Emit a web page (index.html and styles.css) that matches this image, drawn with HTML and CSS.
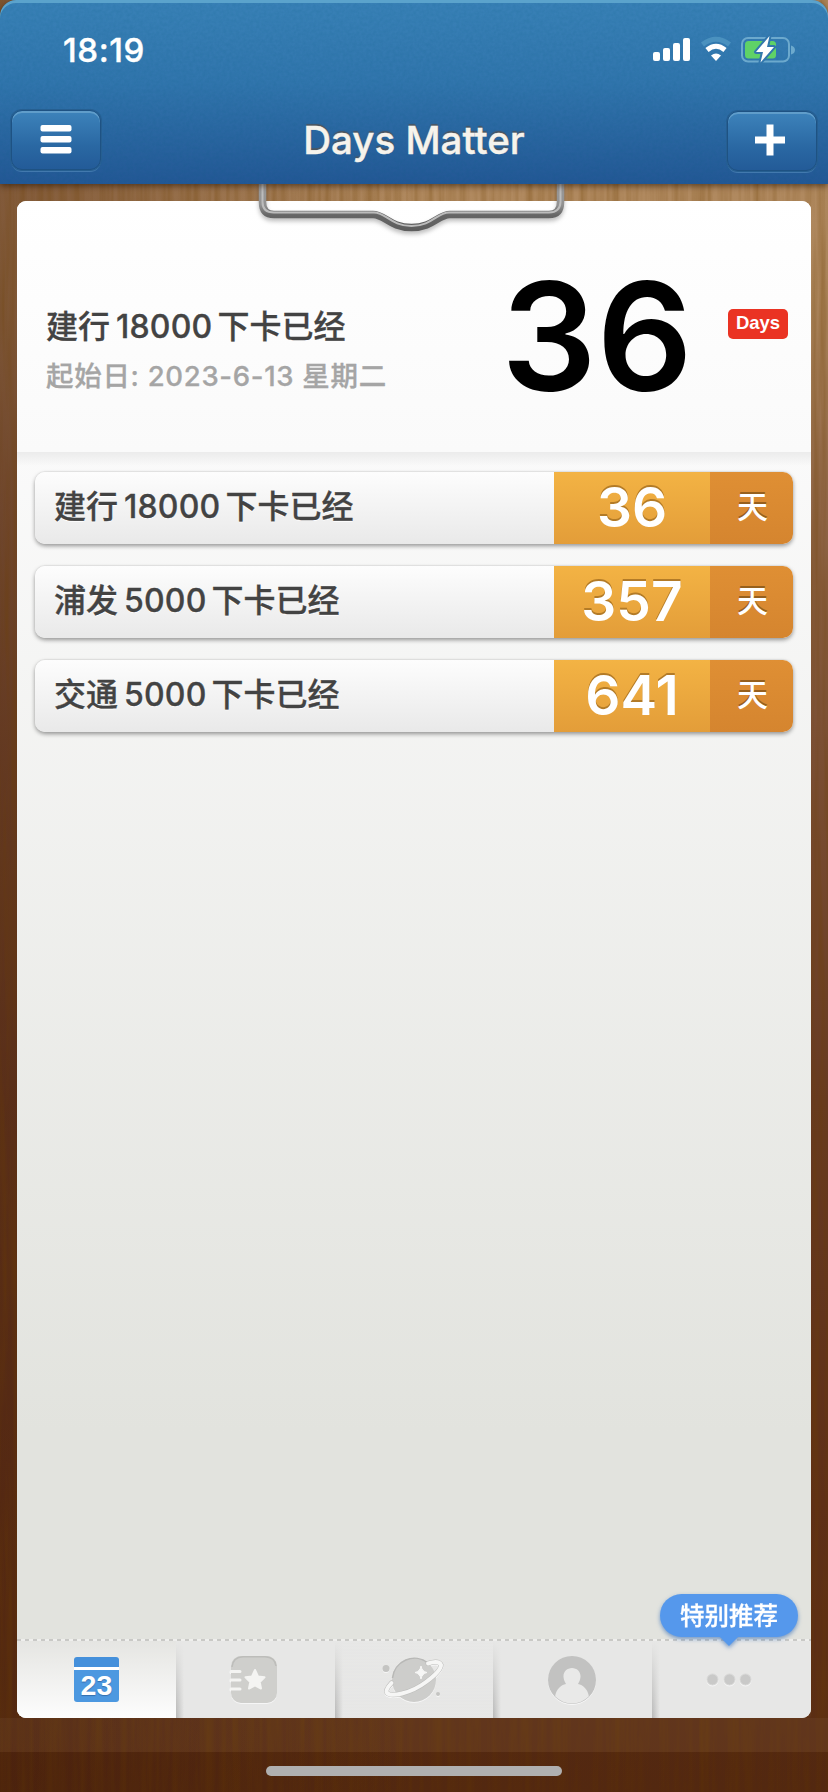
FILE: index.html
```
<!DOCTYPE html>
<html lang="zh-CN">

<head>
  <meta charset="utf-8">
  <meta name="viewport" content="width=device-width, initial-scale=1.0">
  <title>Days Matter</title>
  <link rel="stylesheet" href="styles.css">
</head>

<body>
  <header class="header">
    <div class="status-bar">
      <span class="time">18:19</span>
      <svg class="status-icons" width="144" height="30" viewBox="0 0 144 30">
        <g fill="#fff">
          <rect x="1" y="17" width="7" height="9" rx="2" />
          <rect x="11" y="13" width="7" height="13" rx="2" />
          <rect x="21" y="8" width="7" height="18" rx="2" />
          <rect x="31" y="3" width="7" height="23" rx="2" />
        </g>
        <path d="M50.5 9.5Q64 -1 77.5 9.5" fill="none" stroke="#4a91bf" stroke-width="5" />
        <path d="M55 15Q64 7.500 73 15" fill="none" stroke="#fff" stroke-width="5" />
        <path d="M59 20.500Q64 16.500 69 20.500L64 26Z" fill="#fff" />
        <rect x="90" y="3" width="47" height="23.500" rx="6" fill="none" stroke="#6ca9cd" stroke-width="2" />
        <path d="M139 10.500Q143 11.500 143 15T139 19.500Z" fill="#6ca9cd" />
        <rect x="93" y="6" width="31" height="17.500" rx="3.500" fill="#5fd267" />
        <path d="M117.500 1L104 17H111L108.500 27.500L122 12H115Z" fill="#fff" stroke="#3277ad" stroke-width="4"
          stroke-linejoin="round" paint-order="stroke" />
      </svg>
    </div>
    <div class="nav-bar">
      <button class="nav-button" aria-label="菜单">
        <svg width="32" height="30" viewBox="0 0 32 30" fill="#fff">
          <rect x="0.500" y="0" width="31" height="6.500" rx="2" />
          <rect x="0.500" y="11" width="31" height="6.500" rx="2" />
          <rect x="0.500" y="22" width="31" height="6.500" rx="2" />
        </svg>
      </button>
      <h1 class="title">Days Matter</h1>
      <button class="nav-button add" aria-label="添加">
        <svg width="32" height="32" viewBox="0 0 32 32" fill="#fff">
          <path d="M12.500 0.500H19.500V12.500H31V19.500H19.500V31.500H12.500V19.500H1V12.500H12.500Z" />
        </svg>
      </button>
    </div>
  </header>

  <main class="board">
    <!-- 夹子 -->
    <svg class="clip" width="320" height="60" viewBox="0 0 320 60" fill="none">
      <defs>
        <linearGradient id="metal" x1="0" y1="0" x2="0" y2="52" gradientUnits="userSpaceOnUse">
          <stop offset="0" stop-color="#9a9a9a" />
          <stop offset="0.400" stop-color="#929292" />
          <stop offset="0.600" stop-color="#666" />
          <stop offset="1" stop-color="#5a5a5a" />
        </linearGradient>
      </defs>
      <path class="clip-wire"
        d="M8.500 -4V18Q8.500 30.500 20 30.500H119C131 30.500 136 43.500 157.500 43.500S184 30.500 196 30.500H295Q306.500 30.500 306.500 18V-4"
        stroke="url(#metal)" stroke-width="7.500" />
      <path
        d="M8.500 -4V18Q8.500 28.500 20 28.500H120C132 28.500 137 42 157.500 42S183 28.500 195 28.500H295Q306 28.500 306.500 18V-4"
        stroke="#bcbcbc" stroke-width="2" />
    </svg>

    <section class="hero">
      <div class="hero-info">
        <h2 class="hero-title">建行<span class="num">18000</span>下卡已经</h2>
        <p class="hero-date">起始日: 2023-6-13 星期二</p>
      </div>
      <div class="hero-days">36</div>
      <span class="hero-badge">Days</span>
    </section>

    <ul class="events">
      <li class="event">
        <span class="event-name">建行<span class="num">18000</span>下卡已经</span>
        <span class="event-days">36</span>
        <span class="event-unit">天</span>
      </li>
      <li class="event">
        <span class="event-name">浦发<span class="num">5000</span>下卡已经</span>
        <span class="event-days">357</span>
        <span class="event-unit">天</span>
      </li>
      <li class="event">
        <span class="event-name">交通<span class="num">5000</span>下卡已经</span>
        <span class="event-days">641</span>
        <span class="event-unit">天</span>
      </li>
    </ul>

    <nav class="tabs">
      <a class="tab active">
        <span class="calendar">23</span>
      </a>
      <a class="tab">
        <svg class="tab-icon" width="50" height="50" viewBox="0 0 50 50">
          <rect x="2" y="1" width="46" height="47" rx="10" fill="#cfcfcc" />
          <path d="M3 12Q4 2 14 1.700H36Q46 2 47 11" fill="none" stroke="#bdbdba" stroke-width="1.500" />
          <path d="M2 16.500H11M2 25H11M2 34H11" stroke="#f4f4f2" stroke-width="3" stroke-linecap="round" />
          <path d="M26 15L29 21.500L35.500 22.300L30.700 27L32 33.500L26 30.300L20 33.500L21.300 27L16.500 22.300L23 21.500Z"
            fill="#f4f4f2" stroke="#f4f4f2" stroke-width="2" stroke-linejoin="round" />
        </svg>
      </a>
      <a class="tab">
        <svg class="tab-icon" width="64" height="50" viewBox="0 0 64 50">
          <circle cx="5" cy="13.500" r="3.500" fill="#c4c4c2" />
          <circle cx="57" cy="39" r="2" fill="#c4c4c2" />
          <circle cx="33" cy="25" r="22" fill="#cdcdcb" />
          <path d="M11.500 23A22 22 0 0 1 47 8" fill="none" stroke="#b8b8b6" stroke-width="1.500" />
          <path d="M10.500 28Q4 35 6 38C10 42 29 39 45 27Q60 16 60 10Q58 5 47 8.500" fill="none" stroke="#bdbdbb"
            stroke-width="5" stroke-linecap="round" />
          <path d="M10.500 28Q4 35 6 38C10 42 29 39 45 27Q60 16 60 10Q58 5 47 8.500" fill="none" stroke="#f6f6f5"
            stroke-width="4" stroke-linecap="round" />
          <path d="M40 11Q41 16.500 46 17.500Q41 18.500 40 24Q39 18.500 34 17.500Q39 16.500 40 11Z" fill="#f6f6f5"
            stroke="#f6f6f5" />
        </svg>
      </a>
      <a class="tab">
        <svg class="tab-icon" width="50" height="50" viewBox="0 0 50 50">
          <defs>
            <clipPath id="face">
              <circle cx="25" cy="25" r="23.500" />
            </clipPath>
          </defs>
          <circle cx="25" cy="25" r="24" fill="#c2c2c1" />
          <g clip-path="url(#face)" fill="#e9e9e8">
            <path d="M25 13C30 13 34 17 33.500 22C33.300 25 32 27 31 29C36 30 41 34 42 42V50H8V42C9 34 14 30 19 29C18 27 16.700 25 16.500 22C16 17 20 13 25 13Z" />
          </g>
        </svg>
      </a>
      <a class="tab">
        <svg class="tab-icon more" width="48" height="16" viewBox="0 0 48 16" fill="#c9c9c8" stroke="#d7d7d6">
          <circle cx="7.500" cy="7.500" r="5.500" />
          <circle cx="24.500" cy="7.500" r="5.500" />
          <circle cx="40.500" cy="7.500" r="5.500" />
        </svg>
        <span class="tip">特别推荐</span>
      </a>
    </nav>
  </main>

  <footer class="footer">
    <div class="home-indicator"></div>
  </footer>
</body>

</html>
```

FILE: styles.css
```
* {
  box-sizing: border-box;
}

body {
  margin: 0;
  height: 1792px;
  display: flex;
  flex-direction: column;
  overflow: hidden;
  font-family: Inter, "Noto Sans CJK SC", sans-serif;
  font-weight: 500;
  color: #434343;
  /* 木纹背景 */
  background:
    url("data:image/svg+xml,%3Csvg xmlns='http://www.w3.org/2000/svg' width='828' height='1792'%3E%3Cfilter id='w'%3E%3CfeTurbulence type='fractalNoise' baseFrequency='0.15 0.006' numOctaves='3' seed='4'/%3E%3CfeColorMatrix values='0 0 0 0 0.15 0 0 0 0 0.05 0 0 0 0 0 0.6 0 0 0 -0.2'/%3E%3C/filter%3E%3Crect width='828' height='1792' filter='url(%23w)'/%3E%3C/svg%3E"),
    linear-gradient(90deg, rgba(72, 32, 12, 0.45), rgba(72, 32, 12, 0) 50%),
    linear-gradient(#b18a60 180px, #a98258 300px, #906647 500px, #7b4f33 740px, #673a22 1100px, #5e2f17 1500px, #5a2d12);
}

.header {
  height: 184px;
  flex: none;
  border-radius: 16px 16px 0 0;
  background:
    url("data:image/svg+xml,%3Csvg xmlns='http://www.w3.org/2000/svg' width='200' height='184'%3E%3Cfilter id='n'%3E%3CfeTurbulence type='fractalNoise' baseFrequency='0.3' numOctaves='2' stitchTiles='stitch'/%3E%3CfeColorMatrix values='0 0 0 0 0 0 0 0 0 0.1 0 0 0 0 0.2 0.2 0 0 0 -0.05'/%3E%3C/filter%3E%3Crect width='200' height='184' filter='url(%23n)'/%3E%3C/svg%3E"),
    linear-gradient(#3981b7, #3175ad 45%, #235795);
  box-shadow: inset 0 3px 0 #5ba3cc, 0 2px 6px rgba(40, 20, 0, 0.6);
  position: relative;
  z-index: 1;
}

.status-bar {
  height: 100px;
  padding: 0 32px 0 63px;
  display: flex;
  justify-content: space-between;
  align-items: center;
}

.time {
  font-size: 33px;
  font-weight: 500;
  letter-spacing: 0.6px;
  color: #fff;
  -webkit-text-stroke: 0.4px #fff;
}

.nav-bar {
  height: 80px;
  padding: 0 11px 0 11px;
  display: flex;
  justify-content: space-between;
  align-items: center;
}

.nav-button {
  width: 90px;
  height: 60px;
  padding: 0;
  display: flex;
  justify-content: center;
  align-items: center;
  border: 1px solid #1e5283;
  border-radius: 11px;
  background: linear-gradient(#3d83bb, #2a68a3 60%, #235b98);
  box-shadow: inset 0 2px 0 #609dca, 0 0 0 1px #265f91, 0 2px 0 #4279ae;
}

.nav-button.add {
  padding: 0 4px 3px 0;
  margin-top: 2px;
}

.title {
  margin: 0;
  font-size: 38.500px;
  font-weight: 500;
  letter-spacing: 0;
  color: #f6f3ec;
  text-shadow: 0 -2px 1px #4c5660;
  -webkit-text-stroke: 0.4px #f6f3ec;
}

.board {
  position: relative;
  height: 1517px;
  flex: none;
  margin: 17px 17px 0;
  display: flex;
  flex-direction: column;
  border-radius: 9px;
  background: linear-gradient(#fafafa 250px, #e2e3de 1230px);
}

.clip {
  position: absolute;
  left: 237px;
  top: -17px;
}

.clip-wire {
  filter: drop-shadow(0 3px 2px rgba(0, 0, 0, 0.25));
}

.hero {
  height: 251px;
  flex: none;
  display: flex;
  align-items: flex-start;
  padding-left: 29px;
  border-radius: 9px 9px 0 0;
  background: linear-gradient(#fff, #fafafa);
}

.hero-info {
  width: 421px;
  padding-top: 104px;
}

.hero-title {
  margin: 0;
  font-size: 32px;
  font-weight: 500;
  line-height: 44px;
  white-space: nowrap;
  -webkit-text-stroke: 0.3px;
}

.num {
  letter-spacing: 0.2px;
  margin: 0 5px 0 6px;
}

.hero-date {
  margin: 7px 0 0;
  font-size: 27.500px;
  line-height: 40px;
  color: #a5a5a5;
  white-space: nowrap;
  letter-spacing: 0.7px;
  -webkit-text-stroke: 0.3px;
}

.hero-days {
  width: 260px;
  padding-top: 61px;
  font-size: 150px;
  font-weight: 600;
  line-height: 150px;
  text-align: center;
  color: #000;
}

.hero-badge {
  width: 60px;
  height: 30px;
  margin: 108px 0 0 1px;
  border-radius: 5px;
  background: #ea3323;
  color: #fff;
  font-family: "Liberation Sans", Arial, sans-serif;
  font-size: 18.500px;
  font-weight: bold;
  line-height: 28px;
  text-align: center;
}

.events {
  flex: 1;
  margin: 0;
  padding: 20px 18px;
  list-style: none;
  display: flex;
  flex-direction: column;
  gap: 22px;
  background: linear-gradient(rgba(0, 0, 0, 0.06), rgba(0, 0, 0, 0) 14px);
}

.event {
  height: 72px;
  display: flex;
  align-items: stretch;
  overflow: hidden;
  border-radius: 10px;
  background: linear-gradient(#fdfdfd, #e9e9e9);
  box-shadow: 0 2px 4px rgba(0, 0, 0, 0.4), 0 -1px 1px rgba(0, 0, 0, 0.05);
}

.event-name {
  width: 519px;
  padding-left: 19px;
  font-size: 32px;
  line-height: 69px;
  text-shadow: 0 1px 0 #fff;
  -webkit-text-stroke: 0.3px;
}

.event-days {
  width: 156px;
  background: linear-gradient(#f3b344, #e39d39);
  color: #fff;
  font-size: 55px;
  font-weight: 600;
  line-height: 71px;
  text-align: center;
  text-shadow: 0 -2px 0 #b37b27;
}

.event-unit {
  flex: 1;
  padding-left: 2px;
  background: linear-gradient(#df8f34, #d5852f);
  color: #fff;
  font-size: 31px;
  line-height: 69px;
  text-align: center;
  text-shadow: 0 -2px 0 #97601d;
}

.tabs {
  height: 79px;
  flex: none;
  display: flex;
  border-radius: 0 0 9px 9px;
  background:
    repeating-linear-gradient(90deg, #c9c9c6 0 4px, #efefed 4px 8px) 0 0 / 100% 2px no-repeat,
    #e7e7e6;
}

.tab {
  position: relative;
  width: 20%;
  margin-top: 2px;
  display: flex;
  justify-content: center;
  align-items: center;
}

.tab + .tab {
  padding-right: 2px;
  background:
    linear-gradient(#e7e7e6, rgba(231, 231, 230, 0)),
    linear-gradient(90deg, rgba(0, 0, 0, 0.2), rgba(0, 0, 0, 0) 8px);
}

.tab.active {
  border-radius: 0 0 0 9px;
  background: linear-gradient(#e5e5e2, #fdfdfd);
}

.tab-icon {
  filter: drop-shadow(0 1px 0 #f6f6f6);
}

.tab-icon.more {
  margin-right: 4px;
}

.calendar {
  width: 45px;
  height: 45px;
  padding-top: 13px;
  border-radius: 3px;
  background: linear-gradient(#4590db 10px, #fff 10px, #fff 13px, #4c98e0 13px);
  color: #fff;
  font-family: "Liberation Sans", Arial, sans-serif;
  font-size: 28.500px;
  font-weight: bold;
  line-height: 30px;
  text-align: center;
  text-shadow: 0 1px 1px #346fae;
}

.tip {
  position: absolute;
  right: 13px;
  top: -47px;
  width: 138px;
  height: 43px;
  border-radius: 22px;
  background: #5598ec;
  color: #fff;
  font-size: 24.500px;
  line-height: 45px;
  text-align: center;
  filter: drop-shadow(0 2px 2px rgba(40, 100, 180, 0.6));
  -webkit-text-stroke: 0.3px #fff;
}

.tip::after {
  content: "";
  position: absolute;
  left: 59px;
  top: 42px;
  border: 10px solid transparent;
  border-top-color: #5598ec;
  border-bottom: 0;
}

.footer {
  flex: 1;
  display: flex;
  justify-content: center;
  align-items: flex-start;
  padding-top: 48px;
  background: linear-gradient(rgba(255, 255, 255, 0.04) 34px, rgba(30, 0, 0, 0.12) 34px);
}

.home-indicator {
  width: 296px;
  height: 10px;
  border-radius: 5px;
  background: #b0b0b0;
}
```
